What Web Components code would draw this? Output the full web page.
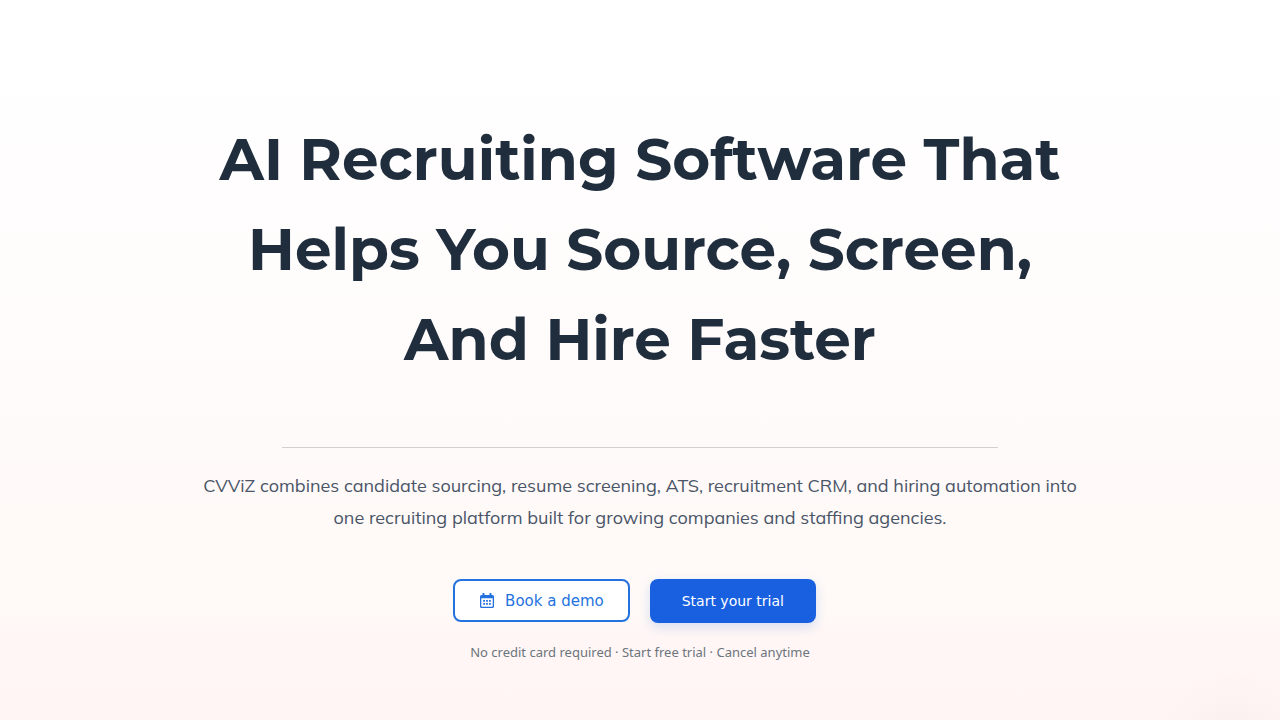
<!DOCTYPE html>
<html lang="en">
<head>
<meta charset="utf-8">
<meta name="viewport" content="width=device-width, initial-scale=1">
<title>CVViZ - AI Recruiting Software</title>
<style>
  body { margin: 0; font-family: "Open Sans", sans-serif; }
</style>
</head>
<body>
<hero-section>
  <hero-title slot="title">AI Recruiting Software That<br>Helps You Source, Screen,<br>And Hire Faster</hero-title>
  <hero-lead slot="lead">CVViZ combines candidate sourcing, resume screening, ATS, recruitment CRM, and hiring automation into<br>one recruiting platform built for growing companies and staffing agencies.</hero-lead>
  <action-link slot="actions" kind="outline" href="#demo"><calendar-icon slot="icon"></calendar-icon>Book a demo</action-link>
  <action-link slot="actions" kind="solid" href="#trial">Start your trial</action-link>
  <hero-note slot="note">No credit card required · Start free trial · Cancel anytime</hero-note>
</hero-section>
<script>
function define(name, html, setup) {
  const template = document.createElement('template');
  template.innerHTML = html;
  customElements.define(name, class extends HTMLElement {
    constructor() {
      super();
      this.attachShadow({ mode: 'open' }).append(template.content.cloneNode(true));
    }
    connectedCallback() { if (setup) setup(this, this.shadowRoot); }
  });
}

define('hero-title', `
  <style>
    :host { display: block; }
    h1 { margin: 0; font: 700 58px/90px Montserrat, Inter, sans-serif; color: #1f2d3d; }
  </style>
  <h1><slot></slot></h1>`);

define('hero-lead', `
  <style>
    :host { display: block; }
    p { margin: 0; font: 400 18px/32px Mulish, "Open Sans", sans-serif; color: #4a5568; }
  </style>
  <p><slot></slot></p>`);

define('hero-note', `
  <style>
    :host { display: block; }
    p { margin: 0; font: 400 13px/20px "Noto Sans", sans-serif; color: #6c757d; }
  </style>
  <p><slot></slot></p>`);

define('calendar-icon', `
  <style>
    :host { display: block; width: 14px; height: 16px; }
    svg { display: block; width: 100%; height: 100%; }
  </style>
  <svg viewBox="0 0 14 16" fill="currentColor" aria-hidden="true">
    <path fill-rule="evenodd" d="M2.500 .4Q2.500 0 2.900 0H4.100Q4.500 0 4.500 .4V2H9.500V.4Q9.500 0 9.900 0H11.100Q11.500 0 11.500 .4V2H12.500Q14 2 14 3.500V13.500Q14 15 12.500 15H1.500Q0 15 0 13.500V3.500Q0 2 1.500 2H2.500ZM1.300 5.300V13.300Q1.300 13.700 1.700 13.700H12.300Q12.700 13.700 12.700 13.300V5.300Z"/>
    <path d="M3.200 7h1.800v1.700H3.200zM6.100 7h1.800v1.700H6.100zM9 7h1.800v1.700H9zM3.200 10h1.800v1.700H3.200zM6.100 10h1.800v1.700H6.100zM9 10h1.800v1.700H9z"/>
  </svg>`);

define('action-link', `
  <style>
    :host { display: block; }
    a {
      box-sizing: border-box; display: flex; align-items: center; gap: 11px;
      border-radius: 8px; text-decoration: none; white-space: nowrap;
      font: 400 15px/20px Verdana, "DejaVu Sans", sans-serif;
    }
    :host([kind="outline"]) a { height: 43px; padding: 0 24px 0 25px; border: 2px solid #2472e0; background: #fff; color: #2472e0; }
    :host([kind="solid"]) a { height: 44px; padding: 0 32px; background: #1860df; color: #fff; font-size: 14px; box-shadow: 0 4px 12px rgba(24, 96, 223, .18); }
  </style>
  <a><slot name="icon"></slot><span><slot></slot></span></a>`,
  (host, root) => root.querySelector('a').setAttribute('href', host.getAttribute('href')));

define('hero-section', `
  <style>
    :host {
      display: block; box-sizing: border-box; min-height: 100vh; padding: 115px 24px 58px; text-align: center;
      background:
        radial-gradient(circle at calc(100% - 45px) calc(100% + 30px), rgba(90, 80, 80, .04), transparent 80px),
        linear-gradient(#fff 5%, #fffafa 62%, #fffaf7 75%, #fffaf7 85%, #fff6f5 88%, #fff5f4);
    }
    hr { width: 716px; max-width: 100%; height: 1px; margin: 62px auto 22px; border: 0; background: #d5cfd1; }
    .actions { display: flex; flex-wrap: wrap; justify-content: center; align-items: flex-start; gap: 20px; margin: 45px 0 19px; padding-right: 11px; }
  </style>
  <slot name="title"></slot>
  <hr>
  <slot name="lead"></slot>
  <div class="actions"><slot name="actions"></slot></div>
  <slot name="note"></slot>`);
</script>
</body>
</html>
